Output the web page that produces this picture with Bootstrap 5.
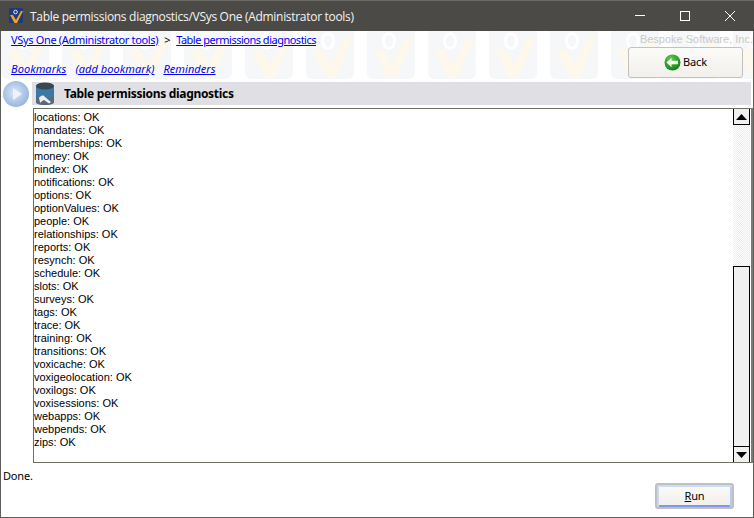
<!DOCTYPE html>
<html lang="en">
<head>
<meta charset="utf-8">
<title>Table permissions diagnostics</title>
<link href="https://cdn.jsdelivr.net/npm/bootstrap@5.3.0/dist/css/bootstrap.min.css" rel="stylesheet">
<style>
html,body{margin:0;height:100%;overflow:hidden;background:#fff}
body{font-family:"Noto Sans","Open Sans",sans-serif;font-size:11px;line-height:13px;color:#000}
.appwin{width:754px;height:518px;border:1px solid #5c5c58;border-top:0;background:#fff}
.capbar{height:31px;background:#4b4a46;color:#f4f4f2;font-family:"Open Sans","Noto Sans",sans-serif;font-size:12px;letter-spacing:-.3px;margin:0 -1px;border-top:1px solid #6b6a66;padding-left:8px;flex:none}
.capicon{width:16px;height:16px;margin-right:6px;flex:none}
.capctl{width:10px;height:10px;display:block}
.capgroup{gap:35px;padding-right:19px}
.tophead{height:49px;flex:none;background-color:#fff;background-image:url("data:image/svg+xml,%3Csvg xmlns='http://www.w3.org/2000/svg' width='61' height='49'%3E%3Crect x='0' y='-6' width='48' height='54' rx='6' fill='%23f6f7f9'/%3E%3Cpath d='M6 19 L17 18 L25 33 L38 8 L47 5 L30 47 L20 47 Z' fill='%23fdf7ec'/%3E%3Cellipse cx='22' cy='10' rx='5.5' ry='7.5' fill='none' stroke='%23fff' stroke-width='3'/%3E%3C/svg%3E");background-repeat:repeat-x;background-position:0 0}
.crumbs{padding:1px 0 0 10px;font-size:11px;line-height:15px;letter-spacing:-.33px}
.crumbs a+span+a{letter-spacing:-.5px}
.quick{padding:0 0 4px 10px;font-size:11px;line-height:15px;font-style:italic;gap:9px;letter-spacing:.06px}
.crumbs a,.quick a{color:#0000ee}
.sepmark{padding:0 6px}
.vendor{font-family:"Liberation Sans",sans-serif;font-size:11px;color:#c9c9c9;line-height:15px;padding-top:1px;text-align:right}
.backbtn{width:115px;height:31px;margin:0 10px 0 0;border:1px solid #c3c1bb;border-radius:3px;background:linear-gradient(#fbfbf9,#f2f0eb);font-size:11px;letter-spacing:-.1px;padding:0;color:#000;gap:2px}
.backbtn:hover{background:#f2f0eb;border-color:#c3c1bb}
.sectrow{height:25px;flex:none;padding-left:2px;margin-top:1px}
.playdot{width:26px;height:26px;flex:none;margin-right:3px}
.secthead{background:#dfdfe4;height:23px;margin-right:2px;font-weight:700;font-size:12px;letter-spacing:-.3px;font-family:"Noto Sans",sans-serif;padding-left:4px}
.secticon{width:18px;height:23px;margin-right:10px;flex:none}
.logbox{margin:2px 0 0 32px;height:355px;flex:none;border:1px solid #6f6f64;border-right:2px solid #7c7c76;overflow:hidden;background:#fff}
.logtext{padding:2px 0 0 0;margin:0;list-style:none;font-family:"Liberation Sans",sans-serif;font-size:11px}
.vbar{width:17px;margin-right:1px;flex:none;margin-top:-1px;margin-bottom:-1px}
.vbtn{height:17px;border:1px solid #000;background:#f0f0f0;flex:none}
.vtrack{background-color:#fff;background-image:conic-gradient(#ececec 25%,#fff 0 50%,#ececec 0 75%,#fff 0);background-size:2px 2px}
.vthumb{height:180px;border:1px solid #000;background:#f0f0f0;border-bottom:0;flex:none}
.statusline{height:20px;padding:6px 0 0 2px;flex:none;letter-spacing:-.2px}
.runrow{padding-right:19px;flex:1}
.runbtn{width:79px;height:26px;border:2px solid #c1c0bc;border-radius:3px;background:linear-gradient(#fbfbf9,#f0eeea);box-shadow:inset 0 2px 0 #c9dcf9,inset 2px 0 0 #c9d7f6,inset -2px 0 0 #b9c9f5,inset 0 -2px 0 #7d97ef;font-size:11px;letter-spacing:-.2px;padding:0;color:#000;line-height:22px}
.runbtn:hover{background:#f0eeea;border-color:#c1c0bc}
.tri{display:block}
</style>
</head>
<body>
<div class="appwin d-flex flex-column">
  <div class="capbar d-flex align-items-center">
    <svg class="capicon" viewBox="0 0 16 16"><rect x="1" y="0" width="14" height="15" rx="1" fill="#1f3a78"/><path d="M2 7 L5 7 L8 12 L13 3 L15 3 L9 15 L6.5 15 Z" fill="#f2a21e"/><circle cx="7.5" cy="4" r="1.8" fill="none" stroke="#dfe6f3" stroke-width="1"/></svg>
    <span class="flex-grow-1">Table permissions diagnostics/VSys One (Administrator tools)</span>
    <div class="d-flex align-items-center capgroup">
      <svg class="capctl" viewBox="0 0 10 10"><path d="M0 4.5H10" stroke="#fff" stroke-width="1"/></svg>
      <svg class="capctl" viewBox="0 0 10 10"><rect x=".5" y=".5" width="9" height="9" fill="none" stroke="#fff"/></svg>
      <svg class="capctl" viewBox="0 0 10 10"><path d="M0 0L10 10M10 0L0 10" stroke="#fff" stroke-width="1"/></svg>
    </div>
  </div>
  <div class="tophead d-flex justify-content-between">
    <div class="d-flex flex-column justify-content-between">
      <div class="crumbs"><a href="#">VSys One (Administrator tools)</a><span class="sepmark">&gt;</span><a href="#">Table permissions diagnostics</a></div>
      <div class="quick d-flex"><a href="#">Bookmarks</a><a href="#">(add bookmark)</a><a href="#">Reminders</a></div>
    </div>
    <div class="d-flex flex-column align-items-end">
      <div class="vendor">Bespoke Software, Inc.</div>
      <button type="button" class="btn backbtn d-flex align-items-center justify-content-center">
        <svg width="17" height="17" viewBox="0 0 17 17"><defs><radialGradient id="gb" cx=".4" cy=".3" r=".8"><stop offset="0" stop-color="#5fd04a"/><stop offset="1" stop-color="#067a0c"/></radialGradient></defs><circle cx="8.5" cy="8.5" r="8" fill="url(#gb)"/><path d="M2.5 8.5L7.5 3.8V6.7H14V10.3H7.5V13.2Z" fill="#fff"/></svg>
        <span>Back</span>
      </button>
    </div>
  </div>
  <div class="sectrow d-flex align-items-center">
    <svg class="playdot" viewBox="0 0 26 26"><defs><radialGradient id="pb" cx=".45" cy=".45" r=".6"><stop offset="0" stop-color="#dbe7f5"/><stop offset="1" stop-color="#92b3dc"/></radialGradient></defs><circle cx="13" cy="13" r="13" fill="url(#pb)"/><path d="M10 7L19 13L10 19Z" fill="#eef3fa"/></svg>
    <div class="secthead d-flex align-items-center flex-grow-1">
      <svg class="secticon" viewBox="0 0 18 23"><path d="M0 4C0 0 18 0 18 4V20C18 24 0 24 0 20Z" fill="#3a78a8"/><ellipse cx="9" cy="4" rx="9" ry="3.5" fill="#3c4650"/><path d="M0 14C6 17 12 17 18 14V20C18 24 0 24 0 20Z" fill="#5d6a75"/><path d="M3 15.5C6 12.5 8 13 9 15L15 20L13 21.5L8 18C6 19 5 20 4 21C4 19 3 17 3 15.5Z" fill="#eceef0"/></svg>
      <span>Table permissions diagnostics</span>
    </div>
  </div>
  <div class="logbox d-flex">
    <ul class="logtext flex-grow-1">
      <li>locations: OK</li><li>mandates: OK</li><li>memberships: OK</li><li>money: OK</li><li>nindex: OK</li><li>notifications: OK</li><li>options: OK</li><li>optionValues: OK</li><li>people: OK</li><li>relationships: OK</li><li>reports: OK</li><li>resynch: OK</li><li>schedule: OK</li><li>slots: OK</li><li>surveys: OK</li><li>tags: OK</li><li>trace: OK</li><li>training: OK</li><li>transitions: OK</li><li>voxicache: OK</li><li>voxigeolocation: OK</li><li>voxilogs: OK</li><li>voxisessions: OK</li><li>webapps: OK</li><li>webpends: OK</li><li>zips: OK</li>
    </ul>
    <div class="vbar d-flex flex-column">
      <div class="vbtn d-flex align-items-center justify-content-center"><svg class="tri" width="11" height="6" viewBox="0 0 11 6"><path d="M5.5 0L11 6H0Z" fill="#000"/></svg></div>
      <div class="vtrack flex-grow-1"></div>
      <div class="vthumb"></div>
      <div class="vbtn d-flex align-items-center justify-content-center"><svg class="tri" width="11" height="6" viewBox="0 0 11 6"><path d="M5.5 6L11 0H0Z" fill="#000"/></svg></div>
    </div>
  </div>
  <div class="statusline">Done.</div>
  <div class="runrow d-flex justify-content-end">
    <button type="button" class="btn runbtn"><u>R</u>un</button>
  </div>
</div>
<script src="https://cdn.jsdelivr.net/npm/bootstrap@5.3.0/dist/js/bootstrap.bundle.min.js"></script>
</body>
</html>
